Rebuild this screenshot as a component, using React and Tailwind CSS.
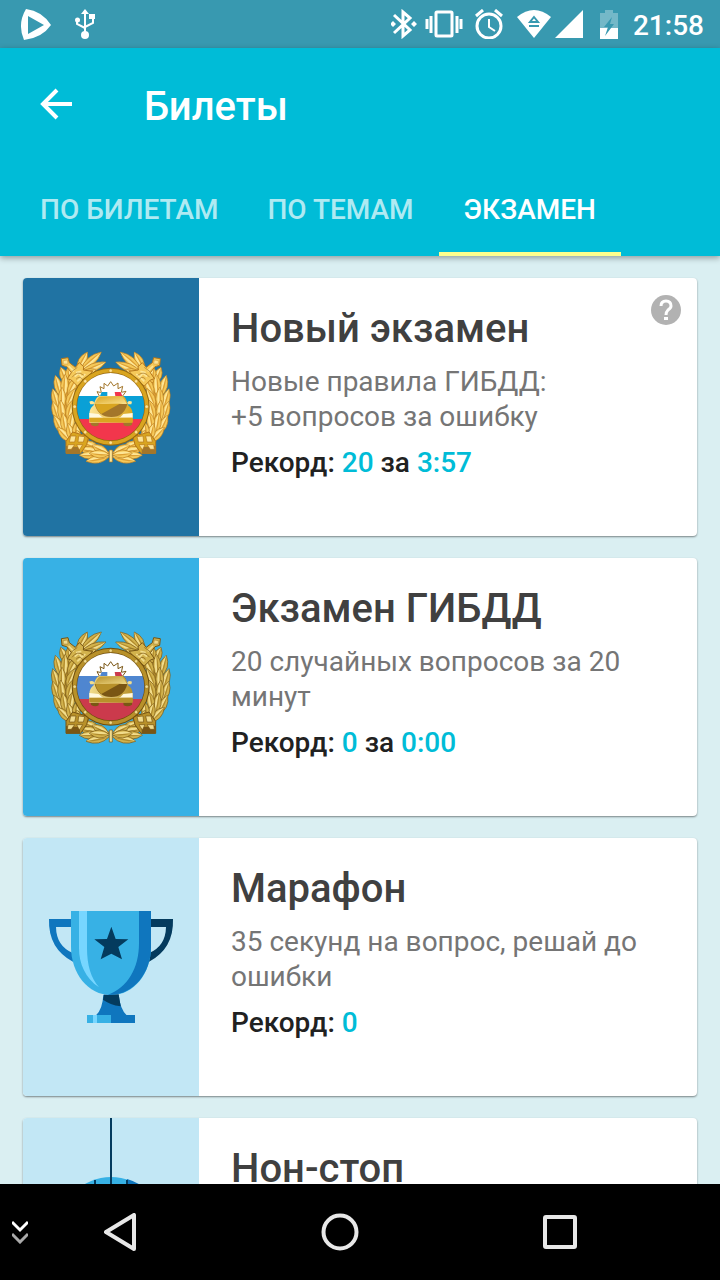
import React from "react";

const TABS = ["ПО БИЛЕТАМ", "ПО ТЕМАМ", "ЭКЗАМЕН"];

const GOLD_BRIGHT = {
  leaf: "#f5c95a",
  light: "#fde596",
  shade: "#dc9f35",
  edge: "#b5761a",
  ring: "#d9a520",
  ringEdge: "#94660f",
  blue: "#0aa0d6",
  red: "#f2364c",
  dark: "#a3762a",
};

const GOLD_DULL = {
  leaf: "#d2b24c",
  light: "#f1dc8c",
  shade: "#b08a2c",
  edge: "#755312",
  ring: "#b8912a",
  ringEdge: "#6f4d0c",
  blue: "#4f86d0",
  red: "#cb3a4c",
  dark: "#7a5614",
};

// Leaves of the left branch: base x, base y, tip x, tip y
const LEAVES = [
  [112, 92, 142, 36],
  [122, 90, 184, 36],
  [120, 100, 198, 66],
  [114, 112, 168, 88],
  [82, 132, 62, 82],
  [92, 132, 84, 82],
  [92, 140, 124, 104],
  [64, 172, 46, 106],
  [72, 172, 76, 102],
  [84, 164, 112, 110],
  [58, 212, 38, 146],
  [66, 212, 66, 142],
  [80, 202, 104, 146],
  [60, 250, 38, 184],
  [68, 250, 62, 180],
  [82, 240, 98, 180],
  [72, 286, 42, 226],
  [80, 286, 68, 218],
  [88, 274, 98, 216],
  [96, 308, 52, 262],
  [100, 308, 84, 250],
  [106, 300, 112, 244],
  [122, 318, 110, 270],
  [134, 316, 134, 276],
  [178, 326, 128, 306],
  [182, 336, 116, 326],
  [180, 344, 118, 346],
  [206, 340, 156, 316],
  [208, 350, 138, 364],
  [208, 344, 148, 340],
];

const leafPath = ([x1, y1, x2, y2], half) => {
  const dx = x2 - x1;
  const dy = y2 - y1;
  const len = Math.hypot(dx, dy);
  const nx = (-dy / len) * half;
  const ny = (dx / len) * half;
  const mx = x1 + dx * 0.5;
  const my = y1 + dy * 0.5;
  return `M${x1} ${y1}Q${mx + nx} ${my + ny} ${x2} ${y2}Q${mx - nx} ${my - ny} ${x1} ${y1}Z`;
};

// The shaded half of a leaf, from its rib to one edge
const halfLeafPath = ([x1, y1, x2, y2], half) => {
  const dx = x2 - x1;
  const dy = y2 - y1;
  const len = Math.hypot(dx, dy);
  const mx = x1 + dx * 0.5 + (-dy / len) * half;
  const my = y1 + dy * 0.5 + (dx / len) * half;
  return `M${x1} ${y1}Q${mx} ${my} ${x2} ${y2}Z`;
};

const Branch = ({ c }) => (
  <g>
    <path
      d="M112 118Q68 160 68 210Q70 290 124 316"
      fill="none"
      stroke={c.shade}
      strokeWidth="34"
    />
    <path d="M140 326L206 344" fill="none" stroke={c.shade} strokeWidth="18" />
    {LEAVES.map((leaf, idx) => (
      <g key={idx}>
        <path d={leafPath(leaf, 24)} fill={c.leaf} stroke={c.edge} strokeWidth="2" />
        <path d={halfLeafPath(leaf, 14)} fill={c.light} />
        <path d={halfLeafPath(leaf, -8)} fill={c.shade} />
      </g>
    ))}
    {/* Sword hilt */}
    <path
      d="M64 56L84 53L88 68L106 82L118 68L131 80L130 90L158 94L132 124L112 138L94 120L82 116L94 98L80 80L66 76Z"
      fill={c.leaf}
      stroke={c.edge}
      strokeWidth="3"
    />
    <path d="M70 62L82 60L84 72L70 72Z" fill={c.light} stroke={c.edge} strokeWidth="1" />
    <path d="M86 78L102 94M108 98L124 94M104 110L116 100L126 112M112 124L136 102" fill="none" stroke={c.light} strokeWidth="5" />
    <path d="M94 96L112 82M96 112Q112 90 132 106M108 118Q120 104 130 122" fill="none" stroke={c.dark} strokeWidth="2" />
    {/* Sword tip mount */}
    <path
      d="M78 304L98 276L146 290L140 314L122 340H78Z"
      fill={c.ring}
      stroke={c.edge}
      strokeWidth="3"
    />
    <path d="M78 318L120 322V340H78Z" fill={c.dark} />
    <path
      d="M92 288H108L104 306H88ZM116 288L134 290L130 306H114ZM84 314H104L94 328H82ZM110 314H128L118 330Z"
      fill={c.light}
      stroke={c.edge}
      strokeWidth="2"
    />
  </g>
);

const Emblem = ({ c, id }) => (
  <svg width="142" height="134" viewBox="0 0 426 402" aria-hidden="true">
    <defs>
      <clipPath id={`${id}-disc`}>
        <circle cx="212" cy="200" r="101" />
      </clipPath>
      <linearGradient id={`${id}-hood`} x1="0" y1="0" x2="1" y2="0">
        <stop offset="0" stopColor={c.light} />
        <stop offset="1" stopColor={c.ring} />
      </linearGradient>
      <linearGradient id={`${id}-glass`} x1="0" y1="0" x2="1" y2="1">
        <stop offset="0" stopColor={c.ring} />
        <stop offset="1" stopColor={c.light} />
      </linearGradient>
    </defs>
    <Branch c={c} />
    <g transform="translate(425 0) scale(-1 1)">
      <Branch c={c} />
    </g>
    <path d="M208 330H217V366H208Z" fill={c.light} stroke={c.edge} strokeWidth="2" />

    <circle cx="212" cy="200" r="117" fill={c.ringEdge} />
    <circle cx="212" cy="200" r="114" fill={c.ring} />
    <circle cx="212" cy="200" r="103" fill={c.ringEdge} />
    <g clipPath={`url(#${id}-disc)`}>
      <path d="M100 90H320V168H100Z" fill="#ffffff" />
      <path d="M100 168H320V237H100Z" fill={c.blue} />
      <path d="M100 237H320V310H100Z" fill={c.red} />
    </g>
    {[0, 45, 90, 135, 180, 225, 270, 315].map((deg) => (
      <circle
        key={deg}
        cx="212"
        cy="92"
        r="5"
        fill={c.light}
        stroke={c.edge}
        strokeWidth="1"
        transform={`rotate(${deg} 212 200)`}
      />
    ))}

    {/* Flashing light rays */}
    <path
      d="M183 180L170 177L178 168L171 155L184 158L180 140L192 146L192 130L203 138L212 125L221 138L234 129L234 146L248 139L244 157L258 154L248 168L256 176L244 180Z"
      fill="#ffffff"
      stroke={c.dark}
      strokeWidth="3"
    />
    <path d="M180 158H246V170H180Z" fill="#ffffff" />
    <path d="M185 156H202V168H180Z" fill={c.blue} />
    <path d="M224 156H242L247 168H226Z" fill={c.red} />

    {/* Car */}
    <path d="M151 240H176V256Q164 262 153 254ZM249 240H276V254Q264 262 251 256Z" fill={c.dark} />
    <path
      d="M178 168H248Q258 172 264 196Q278 206 278 222V248H148V222Q148 206 161 196Q166 172 178 168Z"
      fill={`url(#${id}-hood)`}
    />
    <path d="M180 170H246Q256 180 262 194Q238 190 212 190Q188 190 163 194Q170 176 180 170Z" fill={`url(#${id}-glass)`} />
    <path d="M164 192H262Q252 231 214 231Q174 231 164 192Z" fill={c.dark} />
    <path d="M166 192H238L184 222Q170 212 166 192Z" fill={c.ring} />
    <path d="M148 219L176 222Q184 232 194 234H232Q244 232 250 222L278 219V233H148Z" fill="#fff9df" />
    <path d="M148 233H278V247H148Z" fill={c.ring} />
    <path d="M148 185Q156 180 163 187L161 193H151ZM276 185Q268 180 262 187L264 193H274Z" fill={c.light} />
  </svg>
);

const Trophy = () => (
  <svg width="142" height="134" viewBox="0 0 426 402" aria-hidden="true">
    <path d="M94 57H27Q24 146 100 186V160Q49 139 48 81H94Z" fill="#0f76be" />
    <path d="M332 57H399Q402 146 326 186V160Q377 139 378 81H332Z" fill="#043b5e" />
    <path d="M93 33H333V140C333 220 282 285 213 285C144 285 93 220 93 140Z" fill="#37b1e5" />
    <path d="M297 33H333V140C333 222 278 288 204 284C262 264 297 205 297 130Z" fill="#0f76be" />
    <path d="M117 33H141V145C141 195 153 236 177 262C136 236 117 190 117 145Z" fill="#77d6ff" />
    <path d="M214 80L227 117L265 118L235 141L246 178L214 161L182 178L193 141L163 118L201 117Z" fill="#043b5e" />
    <path d="M190 284H236Q240 326 260 346H168Q188 326 190 284Z" fill="#0f76be" />
    <path d="M192 284Q214 287 236 283L242 319Q210 314 189 299Z" fill="#043b5e" />
    <path d="M141 345H213V369H141Z" fill="#37b1e5" />
    <path d="M213 345H285V369H213Z" fill="#0f76be" />
    <path d="M159 345H171V369H159Z" fill="#77d6ff" />
  </svg>
);

const HangingBall = () => (
  <svg width="176" height="258" viewBox="0 0 176 258" aria-hidden="true">
    <circle cx="88" cy="111" r="52" fill="#37b1e5" />
    <path d="M104 61A52 52 0 0 1 104 161Z" fill="#0f76be" />
    <path d="M72 62V160M104 62V160" fill="none" stroke="#043b5e" strokeWidth="2" />
    <path d="M88 0V163" stroke="#043b5e" strokeWidth="2" />
  </svg>
);

const EXAMS = [
  {
    title: "Новый экзамен",
    text: ["Новые правила ГИБДД:", "+5 вопросов за ошибку"],
    score: "20",
    time: "3:57",
    panel: "bg-[#2073a3]",
    art: <Emblem c={GOLD_BRIGHT} id="new" />,
    help: true,
  },
  {
    title: "Экзамен ГИБДД",
    text: ["20 случайных вопросов за 20 минут"],
    score: "0",
    time: "0:00",
    panel: "bg-[#37b1e5]",
    art: <Emblem c={GOLD_DULL} id="classic" />,
  },
  {
    title: "Марафон",
    text: ["35 секунд на вопрос, решай до ошибки"],
    score: "0",
    panel: "bg-[#c2e7f5]",
    art: <Trophy />,
  },
  {
    title: "Нон-стоп",
    text: [],
    panel: "bg-[#c2e7f5]",
    art: <HangingBall />,
  },
];

const StatusBar = () => (
  <div className="flex h-12 shrink-0 items-center justify-between bg-[#3899b0] pl-5 pr-4 text-white">
    <div className="flex items-center gap-6">
      <svg width="31" height="31" viewBox="0 0 31 31" fill="currentColor">
        <path
          fillRule="evenodd"
          d="M6 0Q22 2 31 16Q22 29 4 31Q-3 15 6 0ZM8 7V25L24 16Z"
        />
      </svg>
      <svg width="20" height="30" viewBox="0 0 20 30" fill="currentColor">
        <path d="M10 0L14 5H6Z" />
        <rect x="14" y="5" width="6" height="5" />
        <circle cx="2.5" cy="11" r="2.5" />
        <circle cx="10" cy="26" r="4" />
        <path d="M10 4V25M2 11V15L10 19M18 9V14L10 18" fill="none" stroke="currentColor" strokeWidth="2" />
      </svg>
    </div>
    <div className="flex items-center">
      <svg width="26" height="30" viewBox="0 0 26 30" fill="none" stroke="currentColor" strokeWidth="3">
        <path d="M3 6L19 21L12 27V3L19 9L3 24" />
        <path d="M2 12L5 15L2 18L-1 15ZM23 12L26 15L23 18L20 15Z" fill="currentColor" stroke="none" />
      </svg>
      <svg className="ml-2" width="38" height="28" viewBox="0 0 38 28" fill="none" stroke="currentColor">
        <rect x="11" y="2" width="16" height="24" rx="1" strokeWidth="3" />
        <path d="M2 9V19M36 9V19M6 6V23M32 6V23" strokeWidth="3" />
      </svg>
      <svg className="ml-3" width="28" height="30" viewBox="0 0 28 30" fill="none" stroke="currentColor">
        <circle cx="14" cy="17" r="12" strokeWidth="3" />
        <path d="M14 10V18L20 22" strokeWidth="2" />
        <path d="M1 7L8 1M27 7L20 1" strokeWidth="3" />
      </svg>
      <svg className="ml-[14px]" width="34" height="28" viewBox="0 0 34 28">
        <path d="M0 7Q17 -7 34 7L17 28Z" fill="currentColor" />
        <path d="M17 7L21 12H13ZM12 16H22" fill="none" stroke="#3899b0" strokeWidth="2" />
      </svg>
      <svg className="ml-1" width="28" height="28" viewBox="0 0 28 28" fill="currentColor">
        <path d="M28 0V28H0Z" />
      </svg>
      <svg className="ml-4" width="20" height="29" viewBox="0 0 20 29">
        <path d="M6 0H14V3H19V18H1V3H6Z" fill="#74b8c8" />
        <path d="M1 18H19V29H1Z" fill="#ffffff" />
        <path d="M13 7L5 17H9L6 26L15 14H11Z" fill="#3899b0" />
      </svg>
      <span className="ml-[14px] pt-[3px] text-[28px] font-medium leading-8">21:58</span>
    </div>
  </div>
);

const Header = () => (
  <header className="relative z-10 shrink-0 bg-[#00bcd7] text-white shadow-[0_2px_6px_rgba(0,0,0,0.35)]">
    <div className="flex h-28 items-center pl-10">
      <button type="button" aria-label="Назад">
        <svg width="32" height="32" viewBox="0 0 32 32" fill="none" stroke="currentColor" strokeWidth="4">
          <path d="M32 16H3M17 2L3 16L17 30" />
        </svg>
      </button>
      <h1 className="ml-[72px] pt-[6px] text-[40px] font-medium leading-12">Билеты</h1>
    </div>
    <div className="flex h-24 gap-px pl-4">
      {TABS.map((tab, idx) => (
        <button
          key={tab}
          type="button"
          className={
            idx === 2
              ? "border-b-4 border-[#ffff8d] px-[25px] pt-[7px] text-[28px] font-medium leading-8"
              : "border-b-4 border-transparent px-6 pt-[7px] text-[28px] font-medium leading-8 text-white/70"
          }
        >
          {tab}
        </button>
      ))}
    </div>
  </header>
);

const ExamCard = ({ exam }) => (
  <article className="relative flex min-h-[258px] shrink-0 overflow-hidden rounded bg-white shadow-[0_1px_2px_rgba(0,0,0,0.45)]">
    <div className={`flex w-44 shrink-0 items-center justify-center ${exam.panel}`}>
      {exam.art}
    </div>
    <div className="flex-1 pl-8 pr-12 pt-[27px]">
      <h2 className="text-[40px] font-medium leading-12 text-[#404040]">{exam.title}</h2>
      <p className="mt-[11px] text-[28px] leading-[35px] text-[#757575]">
        {exam.text.map((line) => (
          <span key={line} className="block">
            {line}
          </span>
        ))}
      </p>
      {exam.score && (
        <p className="mt-[11px] text-[28px] font-medium leading-[35px] text-[#212121]">
          Рекорд: <span className="text-[#00bcd7]">{exam.score}</span>
          {exam.time && (
            <>
              {" "}
              за <span className="text-[#00bcd7]">{exam.time}</span>
            </>
          )}
        </p>
      )}
    </div>
    {exam.help && (
      <button type="button" aria-label="Справка" className="absolute right-4 top-[17px]">
        <svg width="30" height="30" viewBox="0 0 30 30">
          <circle cx="15" cy="15" r="15" fill="#b2b2b2" />
          <path d="M10 11Q10 6 15 6Q20 6 20 11Q20 13 17 15Q15 17 15 20" fill="none" stroke="#ffffff" strokeWidth="3" />
          <path d="M13 22H17V25H13Z" fill="#ffffff" />
        </svg>
      </button>
    )}
  </article>
);

const NavigationBar = () => (
  <nav className="flex h-24 shrink-0 items-center bg-black text-[#e8e8e8]">
    <button type="button" aria-label="Скрыть панель" className="flex w-10 justify-center">
      <svg width="16" height="24" viewBox="0 0 16 24" fill="none" strokeWidth="3">
        <path d="M0 2L8 10L16 2" stroke="#ffffff" />
        <path d="M0 14L8 22L16 14" stroke="#aaaaaa" />
      </svg>
    </button>
    <div className="ml-12 mr-32 flex flex-1 justify-between">
      <button type="button" aria-label="Назад" className="flex w-16 justify-center">
        <svg width="32" height="38" viewBox="0 0 32 38" fill="none" stroke="currentColor" strokeWidth="4" strokeLinejoin="round">
          <path d="M30 2V36L2 19Z" />
        </svg>
      </button>
      <button type="button" aria-label="Домой" className="flex w-16 justify-center">
        <svg width="38" height="38" viewBox="0 0 38 38" fill="none" stroke="currentColor" strokeWidth="4">
          <circle cx="19" cy="19" r="16.5" />
        </svg>
      </button>
      <button type="button" aria-label="Недавние" className="flex w-16 items-center justify-center">
        <svg width="34" height="34" viewBox="0 0 34 34" fill="none" stroke="currentColor" strokeWidth="4">
          <rect x="2" y="2" width="30" height="30" rx="1" />
        </svg>
      </button>
    </div>
  </nav>
);

const App = () => (
  <div className="flex h-screen flex-col overflow-hidden bg-[#daeff2] font-[Roboto,sans-serif]">
    <StatusBar />
    <Header />
    <main className="flex min-h-0 flex-1 flex-col gap-[22px] overflow-hidden px-[23px] pt-[22px]">
      {EXAMS.map((exam) => (
        <ExamCard key={exam.title} exam={exam} />
      ))}
    </main>
    <NavigationBar />
  </div>
);

export default App;
